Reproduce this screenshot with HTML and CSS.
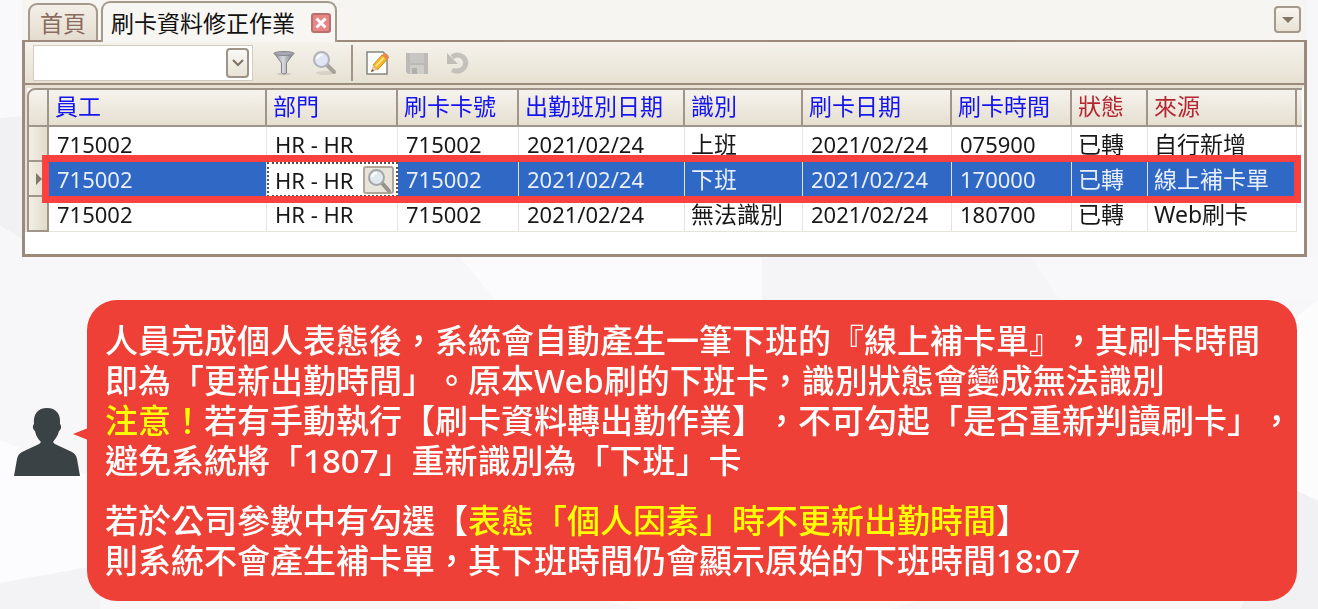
FILE: index.html
```html
<!DOCTYPE html>
<html lang="zh-Hant">
<head>
<meta charset="utf-8">
<title>刷卡資料修正作業</title>
<link rel="stylesheet" href="styles.css">
</head>
<body>
<svg class="backdrop" viewBox="0 0 1318 609" preserveAspectRatio="none" aria-hidden="true">
  <rect width="1318" height="609" fill="#f7f7f9"/>
  <path d="M0 0H24V120H0Z" fill="#f9f9fb"/>
  <path d="M0 118L24 116V240L0 225Z" fill="#f1f1f4"/>
  <path d="M460 257H762V300H495Z" fill="#fbfbfd"/>
  <path d="M762 257H1030L1060 300H762Z" fill="#f5f5f7"/>
  <path d="M1030 257H1318V300H1060Z" fill="#f8f8fa"/>
  <path d="M1297 316L1318 300V500L1297 491Z" fill="#fcfcfd"/>
  <path d="M1297 491L1318 501V609H1240Z" fill="#f1f1f3"/>
  <path d="M0 440L100 480V570L0 583Z" fill="#fcfcfe"/>
  <path d="M0 583L100 565V609H0Z" fill="#f3f3f5"/>
  <path d="M600 600H920L890 609H640Z" fill="#fcfcfd"/>
</svg>
<main class="page">
  <section class="app">
    <nav class="tabs">
      <button class="tab" type="button">首頁</button>
      <div class="tab tab-active">
        <span>刷卡資料修正作業</span>
        <button class="tab-close" type="button" aria-label="關閉">
          <svg viewBox="0 0 20 20" width="20" height="20"><rect x="1" y="1" width="18" height="18" rx="2" fill="#ea8585" stroke="#b96f6f" stroke-width="2"/><path d="M5.500 5.500L14.500 14.500M14.500 5.500L5.500 14.500" stroke="#fff" stroke-width="3"/></svg>
        </button>
      </div>
      <button class="tab-menu" type="button" aria-label="分頁清單">
        <svg viewBox="0 0 12 8" width="12" height="8"><path d="M0 1H12L6 7Z" fill="#837768"/></svg>
      </button>
    </nav>
    <div class="window">
      <div class="toolbar">
        <div class="combo">
          <input class="combo-input" type="text" aria-label="查詢條件">
          <button class="combo-button" type="button" aria-label="展開">
            <svg viewBox="0 0 12 8" width="12" height="8"><path d="M1 1L6 6L11 1" fill="none" stroke="#7e7265" stroke-width="2"/></svg>
          </button>
        </div>
        <button class="tool" type="button" aria-label="篩選">
          <svg viewBox="0 0 26 26" width="26" height="26"><defs><linearGradient id="metal"><stop offset="0" stop-color="#85858a"/><stop offset=".45" stop-color="#d9dae0"/><stop offset="1" stop-color="#6f6f74"/></linearGradient></defs><ellipse cx="13" cy="24" rx="7" ry="1.500" fill="#cfcabd"/><path d="M3 3H23L15.500 13V23Q13 25 10.500 23V13Z" fill="url(#metal)" stroke="#85858a"/><ellipse cx="13" cy="3.500" rx="10" ry="2" fill="#a9a9b4" stroke="#87878e"/></svg>
        </button>
        <button class="tool" type="button" aria-label="搜尋">
          <svg viewBox="0 0 26 26" width="26" height="26"><ellipse cx="14" cy="23" rx="9" ry="2" fill="#d7d2c5"/><path d="M16 15L23 22" stroke="#a5a29a" stroke-width="4" stroke-linecap="round"/><circle cx="10.500" cy="9.500" r="7.500" fill="#e1e6f4" stroke="#b1b2bb" stroke-width="2"/><path d="M6 9Q7 5 11 5" fill="none" stroke="#fff" stroke-width="2"/></svg>
        </button>
        <div class="edit-tools">
          <button class="tool" type="button" aria-label="編輯">
            <svg viewBox="0 0 26 26" width="26" height="26"><path d="M3 2H19L23 6V24H3Z" fill="#fdfdfb" stroke="#85857f" stroke-width="1.500"/><path d="M9 15L18 5L23 9.500L13.500 20Z" fill="#f5b526" stroke="#cf8e28"/><path d="M18 5L20 3Q25 4 25 8L23 9.500Z" fill="#e8894b"/><path d="M9 15L13.500 20L7 22Z" fill="#e9c697"/><path d="M7 22L8 19L10 21Z" fill="#555"/><path d="M11.500 16.500L20 7.500" stroke="#ffe07a" stroke-width="2"/></svg>
          </button>
          <button class="tool" type="button" aria-label="儲存">
            <svg viewBox="0 0 26 26" width="26" height="26"><path d="M2 3H24V24H4L2 22Z" fill="#bcbab6"/><path d="M6 3H20V13H6Z" fill="#c8c6c2"/><path d="M6 15H20V24H6Z" fill="#cfcdc8"/><path d="M8 18H13V24H8Z" fill="#b2b0ac"/></svg>
          </button>
          <button class="tool" type="button" aria-label="復原">
            <svg viewBox="0 0 26 26" width="26" height="26"><path d="M8 7Q14 3 19 7Q24 12 20 18Q15 23 8 20" fill="none" stroke="#c4c1ba" stroke-width="5"/><path d="M3 3V14H14Z" fill="#c1beb7"/></svg>
          </button>
        </div>
      </div>
      <table class="grid">
        <colgroup>
          <col class="c-mark"><col class="c-staff"><col class="c-dept"><col class="c-card"><col class="c-shift"><col class="c-kind"><col class="c-date"><col class="c-time"><col class="c-state"><col class="c-source"><col class="c-tail">
        </colgroup>
        <thead>
          <tr><th></th><th>員工</th><th>部門</th><th>刷卡卡號</th><th>出勤班別日期</th><th>識別</th><th>刷卡日期</th><th>刷卡時間</th><th class="alt">狀態</th><th class="alt">來源</th><th></th></tr>
        </thead>
        <tbody>
          <tr><td class="mark"></td><td class="num">715002</td><td class="num">HR - HR</td><td class="num">715002</td><td class="num">2021/02/24</td><td>上班</td><td class="num">2021/02/24</td><td class="num">075900</td><td>已轉</td><td>自行新增</td><td class="tail"></td></tr>
          <tr class="selected"><td class="mark"><svg viewBox="0 0 6 12" width="6" height="12"><path d="M0 0L6 6L0 12Z" fill="#837768"/></svg></td><td class="num">715002</td>
            <td class="num editing"><div class="lookup"><span>HR - HR</span><button type="button" class="lookup-button" aria-label="查詢部門"><svg viewBox="0 0 26 26" width="26" height="26"><path d="M16 15L23 23" stroke="#96938c" stroke-width="4" stroke-linecap="round"/><circle cx="10.500" cy="9.500" r="7.500" fill="#dfe9ee" stroke="#a5a8aa" stroke-width="2"/><path d="M6 9Q7 5 11 5" fill="none" stroke="#fff" stroke-width="2"/></svg></button></div></td>
            <td class="num">715002</td><td class="num">2021/02/24</td><td>下班</td><td class="num">2021/02/24</td><td class="num">170000</td><td>已轉</td><td>線上補卡單</td><td class="tail"></td></tr>
          <tr><td class="mark"></td><td class="num">715002</td><td class="num">HR - HR</td><td class="num">715002</td><td class="num">2021/02/24</td><td>無法識別</td><td class="num">2021/02/24</td><td class="num">180700</td><td>已轉</td><td>Web刷卡</td><td class="tail"></td></tr>
        </tbody>
      </table>
    </div>
  </section>
  <section class="note">
    <svg class="person" viewBox="0 0 66 68" width="66" height="68" aria-hidden="true"><path d="M33 0C42 0 47 6 46 16C48 18 47 22 45 23C44 28 41 31 39 34Q40 36 43 37L58 44Q62 46 63 51L66 68H0L3 51Q4 46 8 44L23 37Q26 36 27 34C24 31 22 28 21 23C19 22 18 18 20 16C19 6 24 0 33 0Z" fill="#3b4245"/></svg>
    <div class="bubble">
      <p>人員完成個人表態後，系統會自動產生一筆下班的『線上補卡單』，其刷卡時間<br>即為「更新出勤時間」。原本Web刷的下班卡，識別狀態會變成無法識別<br><em>注意！</em>若有手動執行【刷卡資料轉出勤作業】，不可勾起「是否重新判讀刷卡」，<br>避免系統將「1807」重新識別為「下班」卡</p>
      <p>若於公司參數中有勾選【<em>表態「個人因素」時不更新出勤時間</em>】<br>則系統不會產生補卡單，其下班時間仍會顯示原始的下班時間18:07</p>
    </div>
  </section>
</main>
</body>
</html>
```
FILE: styles.css
```css
* { box-sizing: border-box; }
body {
  margin: 0;
  color: #181818;
  font-family: "Noto Sans", "Noto Sans CJK TC", sans-serif;
  font-size: 23px;
}
button { margin: 0; padding: 0; border: 0; background: none; font: inherit; color: inherit; }
svg { display: block; }
.backdrop { position: fixed; inset: 0; z-index: -1; width: 100%; height: 100%; }
.page { display: flex; flex-direction: column; gap: 43px; padding-bottom: 8px; }

.app { margin: 0 11px 0 22px; background: #f7f5f1; }
.tabs { display: flex; align-items: flex-end; gap: 3px; height: 40px; padding: 0 6px; }
.tab {
  display: flex;
  align-items: center;
  height: 37px;
  padding: 0 10px;
  border: 2px solid #a59a8e;
  border-bottom: 0;
  border-radius: 9px 9px 0 0;
  background: linear-gradient(#f3efe7, #e5dccf);
  color: #8b6c60;
  line-height: 32px;
}
.tab-active {
  position: relative;
  z-index: 1;
  gap: 16px;
  height: 41px;
  padding: 0 4px 0 8px;
  margin-bottom: -2px;
  background: #f8f6f2;
  color: #111;
}
.tab-menu {
  display: grid;
  place-items: center;
  width: 27px;
  height: 27px;
  margin: 0 0 7px auto;
  border: 2px solid #a39a8c;
  border-radius: 4px;
  background: linear-gradient(#f8f5ef, #e9e3d5);
}
.window { padding-bottom: 22px; border: 3px solid #9c8b7d; border-top-width: 2px; background: #fff; }
.toolbar {
  display: flex;
  align-items: center;
  gap: 14px;
  height: 43px;
  padding: 0 8px;
  border-bottom: 2px solid #9b8c7e;
  background: linear-gradient(#f5f2eb, #e6e1d2);
}
.combo {
  display: flex;
  align-items: center;
  width: 220px;
  height: 36px;
  margin-right: 4px;
  padding-right: 3px;
  border: 1px solid #d3cbbd;
  background: #fff;
}
.combo-input { flex: 1; min-width: 0; height: 32px; border: 0; background: none; font: inherit; outline: 0; }
.combo-button {
  display: grid;
  place-items: center;
  width: 23px;
  height: 30px;
  border: 2px solid #9d9386;
  border-radius: 4px;
  background: linear-gradient(#faf8f4, #e9e3d6);
}
.tool { flex: none; width: 26px; height: 26px; }
.edit-tools {
  display: flex;
  align-items: center;
  gap: 14px;
  height: 36px;
  padding-left: 11px;
  border-left: 2px solid #a2968a;
}

.grid {
  width: 100%;
  border-top: 3px solid #e8e0d2;
  border-left: 2px solid #e8e0d2;
  border-right: 1px solid #fff;
  border-collapse: separate;
  border-spacing: 0;
  table-layout: fixed;
}
.c-mark { width: 22px; }
.c-staff { width: 218px; }
.c-dept { width: 131px; }
.c-card { width: 121px; }
.c-shift { width: 166px; }
.c-kind { width: 118px; }
.c-date { width: 149px; }
.c-time { width: 120px; }
.c-state { width: 76px; }
.c-source { width: 149px; }
.c-tail { width: 5px; }
th, td { padding: 0 0 0 6px; text-align: left; white-space: nowrap; }
th {
  height: 39px;
  border: solid #a0958a;
  border-width: 2px 2px 2px 0;
  background: linear-gradient(#f6f3ed, #e6dfd1);
  color: #1414f0;
  font-weight: 400;
  line-height: 32px;
  vertical-align: top;
}
th:first-child { border-left-width: 2px; border-radius: 8px 0 0 0; }
th:last-child { padding: 0; border-right: 0; }
th.alt { color: #b32632; }
td { height: 35px; border: solid #e6e3dd; border-width: 0 1px 1px 0; line-height: 34px; }
.num { padding-left: 8px; font-size: 22px; }
.mark { padding-left: 7px; border: solid #a0958a; border-width: 0 2px 2px; background: linear-gradient(90deg, #f2eee6, #e3dccd); }
.tail { padding: 0; border: 0; }
.selected { position: relative; }
.selected td { background: #2f68c5; color: #e8effa; }
.selected .mark { background: linear-gradient(90deg, #f2eee6, #e3dccd); }
.selected .tail { background: #fff; }
.selected::after {
  content: "";
  position: absolute;
  inset: -7px 2px -6px 15px;
  border: 7px solid #fb4040;
}
.selected .editing { padding: 0; border: 2px dotted #555; background: #fff; color: #181818; }
.lookup { display: flex; align-items: center; justify-content: space-between; height: 31px; padding: 0 2px 0 6px; }
.lookup-button {
  display: grid;
  place-items: center;
  width: 31px;
  height: 28px;
  border: 2px solid #b0a798;
  border-radius: 3px;
  background: #e9e4d9;
}

.note { display: flex; align-items: center; gap: 7px; padding: 0 21px 0 14px; }
.person { flex: none; margin-bottom: 18px; }
.bubble {
  position: relative;
  flex: 1;
  display: flex;
  flex-direction: column;
  gap: 20px;
  padding: 21px 0 20px 18px;
  border-radius: 30px;
  background: #ee4036;
  color: #fff;
  font-size: 33px;
  font-weight: 500;
  line-height: 40px;
  white-space: nowrap;
  text-spacing-trim: space-all;
}
.bubble::before {
  content: "";
  position: absolute;
  top: 128px;
  left: -14px;
  width: 15px;
  height: 12px;
  background: #ee4036;
  clip-path: polygon(0 50%, 100% 0, 100% 100%);
}
.bubble p { margin: 0; }
.bubble em { color: #ff0; font-style: normal; }
```
